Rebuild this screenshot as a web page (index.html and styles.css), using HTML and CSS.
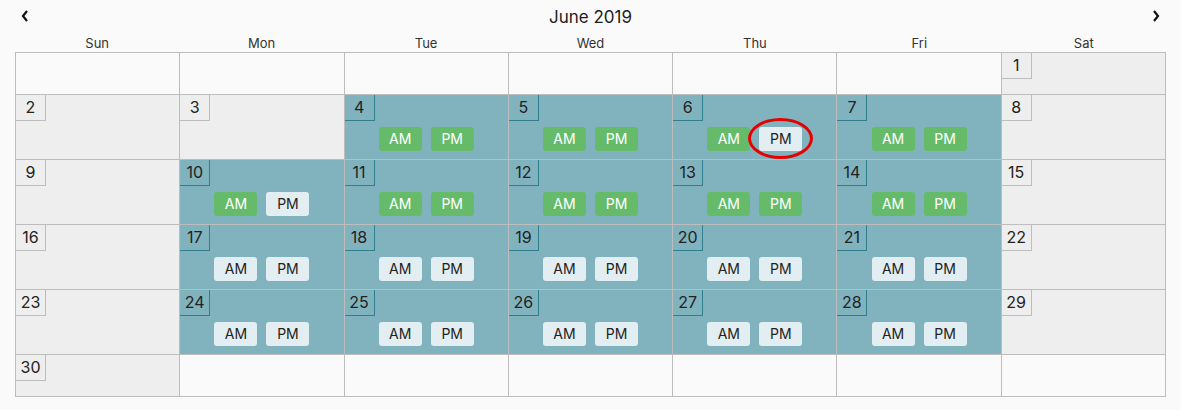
FILE: index.html
```html
<!DOCTYPE html>
<html>
<head>
<meta charset="utf-8">
<link rel="stylesheet" href="styles.css">
</head>
<body>
<div class="cal">
  <div class="head">
    <button class="nav"><svg width="10" height="14" viewBox="0 0 10 14"><path d="M7 2 L3 7 L7 12" fill="none" stroke="#111" stroke-width="2.2"/></svg></button>
    <div class="title">June 2019</div>
    <button class="nav"><svg width="10" height="14" viewBox="0 0 10 14"><path d="M3 2 L7 7 L3 12" fill="none" stroke="#111" stroke-width="2.2"/></svg></button>
  </div>
  <div class="dows">
    <div>Sun</div><div>Mon</div><div>Tue</div><div>Wed</div><div>Thu</div><div>Fri</div><div>Sat</div>
  </div>
  <div class="grid">
    <div class="cell empty short"></div><div class="cell empty short"></div><div class="cell empty short"></div><div class="cell empty short"></div><div class="cell empty short"></div><div class="cell empty short"></div>
    <div class="cell off short"><span class="num">1</span></div>

    <div class="cell off"><span class="num">2</span></div>
    <div class="cell off"><span class="num">3</span></div>
    <div class="cell on"><span class="num">4</span><div class="slots"><span class="slot sel">AM</span><span class="slot sel">PM</span></div></div>
    <div class="cell on"><span class="num">5</span><div class="slots"><span class="slot sel">AM</span><span class="slot sel">PM</span></div></div>
    <div class="cell on"><span class="num">6</span><div class="slots"><span class="slot sel">AM</span><span class="slot mark">PM<span class="ring"></span></span></div></div>
    <div class="cell on"><span class="num">7</span><div class="slots"><span class="slot sel">AM</span><span class="slot sel">PM</span></div></div>
    <div class="cell off"><span class="num">8</span></div>

    <div class="cell off"><span class="num">9</span></div>
    <div class="cell on"><span class="num">10</span><div class="slots"><span class="slot sel">AM</span><span class="slot">PM</span></div></div>
    <div class="cell on"><span class="num">11</span><div class="slots"><span class="slot sel">AM</span><span class="slot sel">PM</span></div></div>
    <div class="cell on"><span class="num">12</span><div class="slots"><span class="slot sel">AM</span><span class="slot sel">PM</span></div></div>
    <div class="cell on"><span class="num">13</span><div class="slots"><span class="slot sel">AM</span><span class="slot sel">PM</span></div></div>
    <div class="cell on"><span class="num">14</span><div class="slots"><span class="slot sel">AM</span><span class="slot sel">PM</span></div></div>
    <div class="cell off"><span class="num">15</span></div>

    <div class="cell off"><span class="num">16</span></div>
    <div class="cell on"><span class="num">17</span><div class="slots"><span class="slot">AM</span><span class="slot">PM</span></div></div>
    <div class="cell on"><span class="num">18</span><div class="slots"><span class="slot">AM</span><span class="slot">PM</span></div></div>
    <div class="cell on"><span class="num">19</span><div class="slots"><span class="slot">AM</span><span class="slot">PM</span></div></div>
    <div class="cell on"><span class="num">20</span><div class="slots"><span class="slot">AM</span><span class="slot">PM</span></div></div>
    <div class="cell on"><span class="num">21</span><div class="slots"><span class="slot">AM</span><span class="slot">PM</span></div></div>
    <div class="cell off"><span class="num">22</span></div>

    <div class="cell off"><span class="num">23</span></div>
    <div class="cell on"><span class="num">24</span><div class="slots"><span class="slot">AM</span><span class="slot">PM</span></div></div>
    <div class="cell on"><span class="num">25</span><div class="slots"><span class="slot">AM</span><span class="slot">PM</span></div></div>
    <div class="cell on"><span class="num">26</span><div class="slots"><span class="slot">AM</span><span class="slot">PM</span></div></div>
    <div class="cell on"><span class="num">27</span><div class="slots"><span class="slot">AM</span><span class="slot">PM</span></div></div>
    <div class="cell on"><span class="num">28</span><div class="slots"><span class="slot">AM</span><span class="slot">PM</span></div></div>
    <div class="cell off"><span class="num">29</span></div>

    <div class="cell off short"><span class="num">30</span></div>
    <div class="cell empty short"></div><div class="cell empty short"></div><div class="cell empty short"></div><div class="cell empty short"></div><div class="cell empty short"></div><div class="cell empty short"></div>
  </div>
</div>
</body>
</html>
```

FILE: styles.css
```css
* { box-sizing: border-box; }
html, body { margin: 0; padding: 0; background: #fafafa; }
body { font-family: "Inter", "Roboto", "Liberation Sans", sans-serif; color: #222; }
.cal { padding: 0 15px; }
.head { display: flex; align-items: center; justify-content: space-between; height: 33px; }
.nav { border: 0; background: none; padding: 0; width: 20px; height: 20px; display: flex; align-items: center; justify-content: center; margin-top: -1px; }
.title { font-size: 17px; font-weight: 400; color: #1e1e1e; }
.dows { display: grid; grid-template-columns: repeat(7, 1fr); height: 19px; padding-top: 1px; font-size: 13px; text-align: center; line-height: 19px; color: #333; }
.grid { display: grid; grid-template-columns: repeat(7, 1fr); grid-template-rows: 42px 65px 65px 65px 65px 42px; border-left: 1px solid #bdbdbd; border-top: 1px solid #bdbdbd; }
.cell { border-right: 1px solid #bdbdbd; border-bottom: 1px solid #bdbdbd; display: flex; flex-direction: column; align-items: flex-start; }
.empty { background: #fafafa; }
.off { background: #eeeeee; }
.on { background: #81b3be; }
.num { width: 30px; height: 26px; line-height: 25px; text-align: center; font-size: 16px; border-right: 1px solid #bdbdbd; border-bottom: 1px solid #bdbdbd; color: #222; }
.on .num { border-color: #2f7f8e; }
.slots { align-self: stretch; display: flex; justify-content: center; gap: 9px; margin-top: 6px; }
.slot { position: relative; width: 43px; height: 24px; line-height: 24px; text-align: center; font-size: 14px; border-radius: 3px; background: #e2eef1; color: #222; }
.slot.sel { background: #66bb6a; color: #fff; }
.ring { position: absolute; left: -11px; top: -9px; width: 65px; height: 41px; border: 3.5px solid #e60000; border-radius: 50%; pointer-events: none; }
```
